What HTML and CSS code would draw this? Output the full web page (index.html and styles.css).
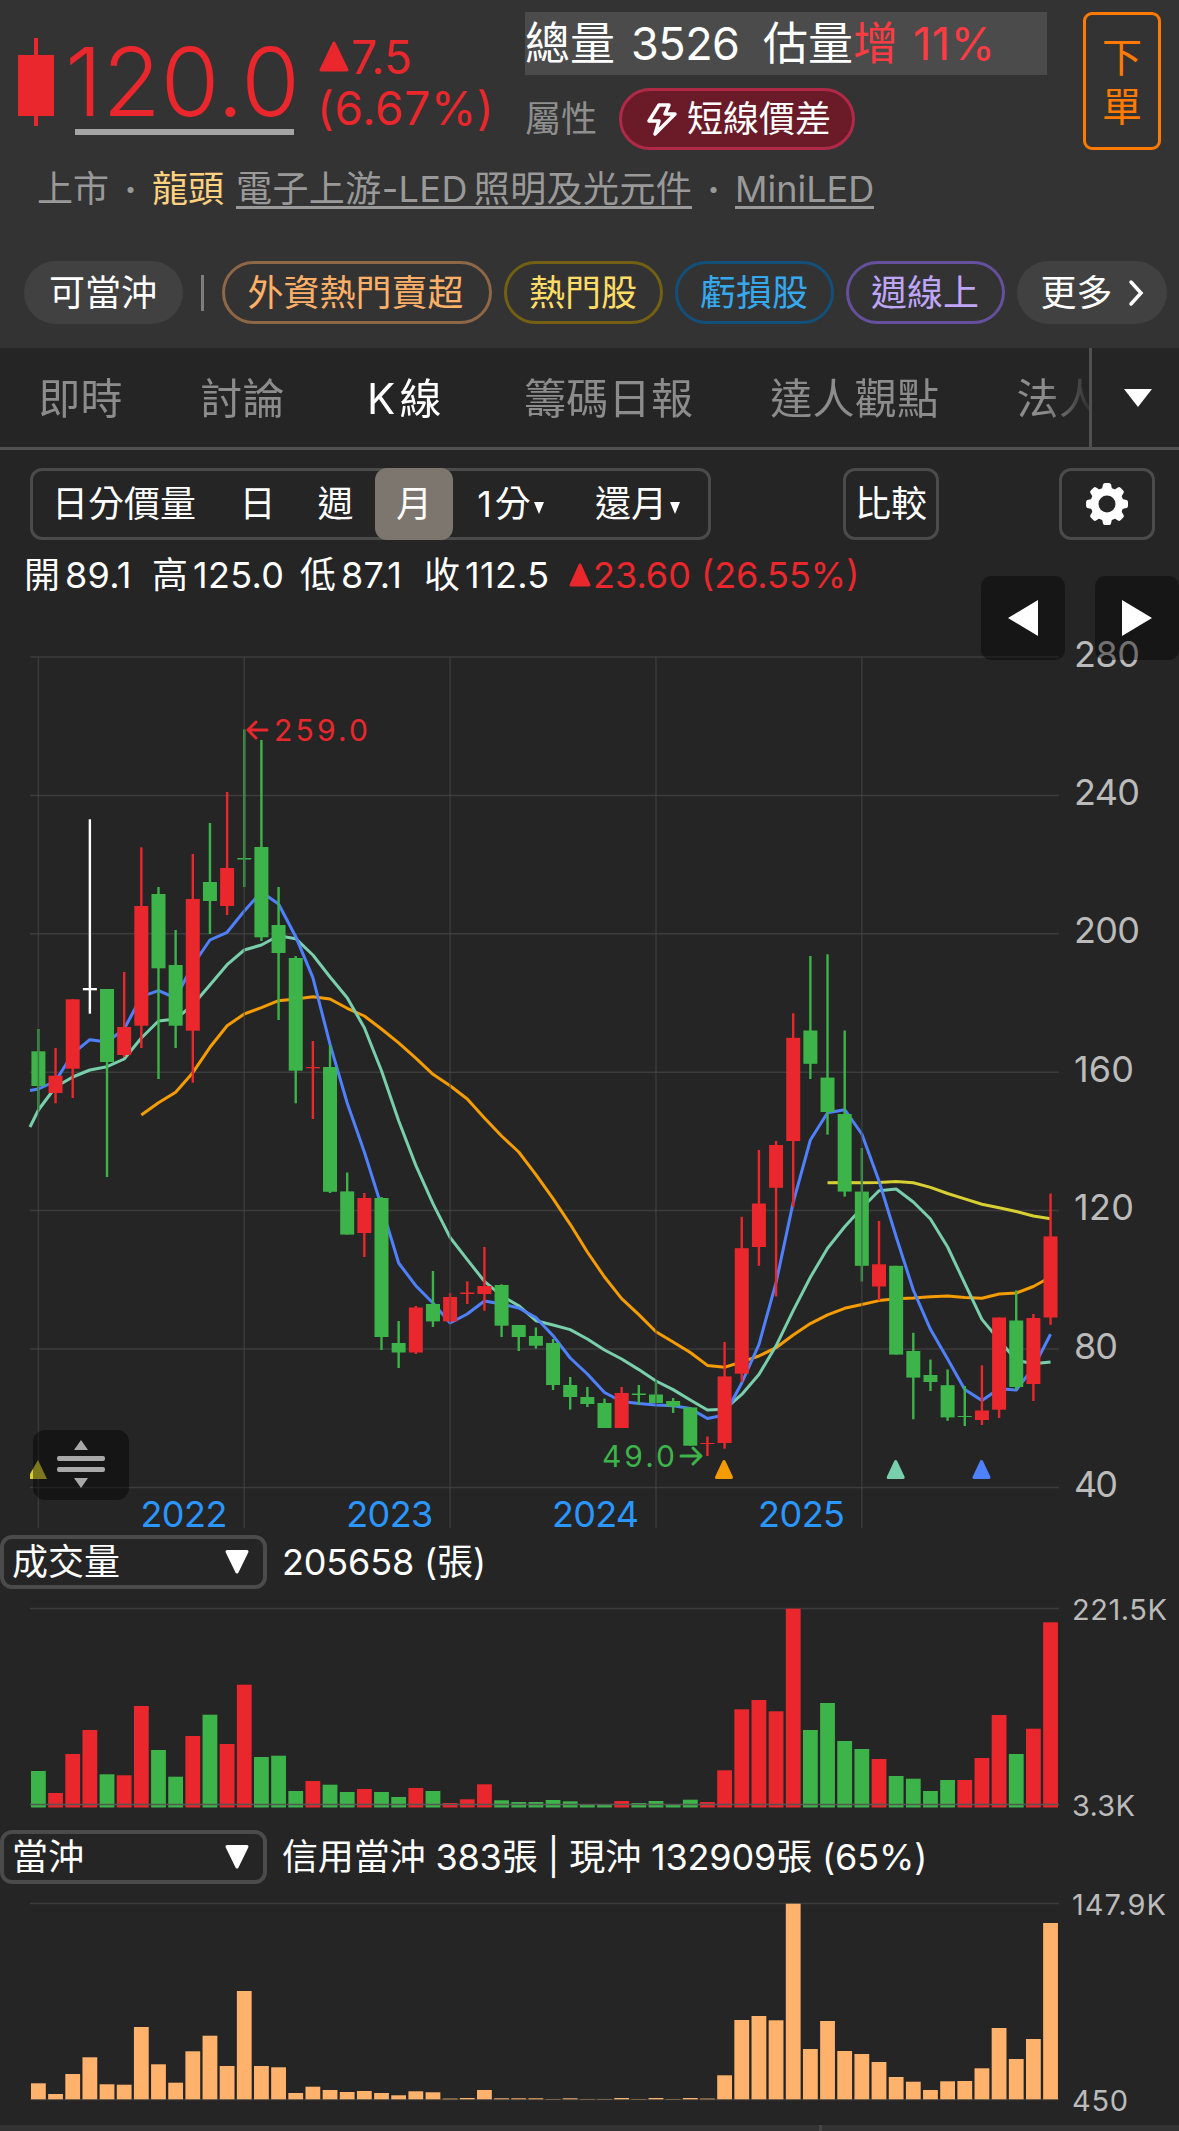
FILE: index.html
```html
<!DOCTYPE html>
<html lang="zh-Hant">
<head>
  <meta charset="UTF-8" />
  <meta name="viewport" content="width=device-width, initial-scale=1.0" />
  <title>K線</title>
  <link rel="stylesheet" href="styles.css">
</head>
<body>
  <header class="header">
    <div class="quote">
      <svg class="candle-icon" width="36" height="88" viewBox="0 0 36 88">
        <rect x="16" y="0" width="4" height="88" />
        <rect x="0" y="17" width="36" height="61" />
      </svg>
      <div class="price">120.0</div>
      <div class="change">
        <div class="change-row">
          <svg width="30" height="31" viewBox="0 0 30 31"><path d="M15 2 L28 29 H2 Z" /></svg>
          <span>7.5</span>
        </div>
        <div class="percent">(6.67%)</div>
      </div>
      <div class="summary">
        <div class="volume-box"><span>總量</span><span class="total">3526</span><span>估量</span><span class="up">增</span><span class="up ratio">11%</span></div>
        <div class="attr">
          <span class="attr-label">屬性</span>
          <span class="attr-pill">
            <svg width="32" height="33" viewBox="0 0 32 33"><path d="M13 2 L23 2 L19 11 H29 L9 31 L13 18 H3 Z" /></svg>
            短線價差
          </span>
        </div>
      </div>
      <button class="order"><span>下</span><span>單</span></button>
    </div>

    <div class="category">
      <span>上市</span><span class="dot">·</span><span class="leader">龍頭</span><a class="industry">電子上游-<span class="led">LED</span>照明及光元件</a><span class="dot">·</span><a class="mini">MiniLED</a>
    </div>

    <div class="chips">
      <span class="chip solid">可當沖</span>
      <span class="separator"></span>
      <span class="chip orange">外資熱門賣超</span>
      <span class="chip yellow">熱門股</span>
      <span class="chip blue">虧損股</span>
      <span class="chip purple">週線上</span>
      <span class="chip solid more">更多
        <svg width="16" height="28" viewBox="0 0 16 28"><path d="M3 3 L13 14 L3 25" /></svg>
      </span>
    </div>
  </header>

  <nav class="tabs">
    <div class="tab-list">
      <span>即時</span>
      <span>討論</span>
      <span class="active">K<i></i>線</span>
      <span>籌碼日報</span>
      <span>達人觀點</span>
      <span>法人</span>
    </div>
    <div class="tab-more">
      <svg width="28" height="18" viewBox="0 0 28 18"><path d="M0 0 H28 L14 18 Z" /></svg>
    </div>
  </nav>

  <div class="toolbar">
    <div class="periods">
      <span class="p-detail">日分價量</span>
      <span class="p-day">日</span>
      <span class="p-week">週</span>
      <span class="p-month">月</span>
      <span class="p-minute">1<i></i>分<svg width="10" height="12" viewBox="0 0 10 12"><path d="M0 0 H10 L5 12 Z" /></svg></span>
      <span class="p-restore">還月<svg width="10" height="12" viewBox="0 0 10 12"><path d="M0 0 H10 L5 12 Z" /></svg></span>
    </div>
    <button class="tool compare">比較</button>
    <button class="tool settings">
      <svg width="42" height="42" viewBox="-21 -21 42 42">
        <g id="gearTeeth"></g>
        <circle r="12.5" />
      </svg>
    </button>
  </div>

  <div class="ohlc">
    <span class="o">開<b>89.1</b></span>
    <span class="h">高<b>125.0</b></span>
    <span class="l">低<b>87.1</b></span>
    <span class="c">收<b>112.5</b></span>
    <span class="diff"><svg width="22" height="24" viewBox="0 0 22 24"><path d="M11 2 L20 22 H2 Z" /></svg><b>23.60 (26.55%)</b></span>
  </div>

  <section class="chart">
    <svg id="kline" width="1179" height="935" viewBox="0 600 1179 935"></svg>
    <button class="nav prev"><svg width="30" height="36" viewBox="0 0 30 36"><path d="M30 0 V36 L0 18 Z" /></svg></button>
    <button class="nav next"><svg width="30" height="36" viewBox="0 0 30 36"><path d="M0 0 V36 L30 18 Z" /></svg></button>
    <div class="resize">
      <svg width="48" height="50" viewBox="0 0 48 50">
        <path d="M24 1 L31 11 H17 Z M24 49 L31 39 H17 Z" />
        <rect x="0" y="17" width="48" height="5" rx="2" />
        <rect x="0" y="28" width="48" height="5" rx="2" />
      </svg>
    </div>
  </section>

  <section class="panel">
    <div class="panel-head">
      <div class="select"><span>成交量</span><svg width="24" height="24" viewBox="0 0 24 24"><path d="M2 1.500 H22 L12 22 Z" /></svg></div>
      <div class="panel-value">205658 (張)</div>
    </div>
    <svg id="volume" width="1179" height="241" viewBox="0 1589 1179 241"></svg>
  </section>

  <section class="panel">
    <div class="panel-head">
      <div class="select"><span>當沖</span><svg width="24" height="24" viewBox="0 0 24 24"><path d="M2 1.500 H22 L12 22 Z" /></svg></div>
      <div class="panel-value">信用當沖 383張 | 現沖 132909張 (65%)</div>
    </div>
    <svg id="daytrade" width="1179" height="241" viewBox="0 1884 1179 241"></svg>
  </section>

  <footer class="bottom"><div></div><div></div></footer>

  <script src="script.js"></script>
</body>
</html>
```
FILE: styles.css
```css
* {
  box-sizing: border-box;
}

body {
  margin: 0;
  width: 1179px;
  height: 2131px;
  overflow: hidden;
  background-color: #252525;
  color: #fff;
  font-family: Inter, "Noto Sans CJK TC", sans-serif;
  font-size: 36px;
  font-weight: 400;
  line-height: 1;
  white-space: nowrap;
}

svg {
  display: block;
  flex: none;
  overflow: visible;
}

button {
  font: inherit;
  color: inherit;
  background: none;
  border: none;
  padding: 0;
}

b {
  font-weight: 400;
}

/* header */
.header {
  height: 348px;
  background-color: #333;
}

.quote {
  display: flex;
  height: 162px;
  padding: 12px 18px 0;
}

.candle-icon {
  margin-top: 26px;
  fill: #ea272c;
}

.price {
  width: 219px;
  height: 123px;
  margin-left: 21px;
  padding-top: 22px;
  border-bottom: 6px solid #a5a5a5;
  color: #ea272c;
  font-size: 95px;
  font-weight: 350;
  letter-spacing: 0;
  text-indent: -10px;
}

.change {
  width: 206px;
  margin-left: 25px;
  padding-top: 21px;
  color: #ea272c;
  font-size: 46px;
}

.change svg,
.diff svg {
  fill: #ea272c;
  stroke: #ea272c;
  stroke-width: 3;
  stroke-linejoin: round;
}

.change-row {
  display: flex;
  align-items: center;
  gap: 2px;
  height: 47px;
}

.percent {
  margin-top: 5px;
  letter-spacing: 0.7px;
  text-indent: -2px;
}

.summary {
  width: 522px;
}

.volume-box {
  display: flex;
  align-items: center;
  height: 63px;
  background-color: #4b4b4b;
  font-size: 45px;
}

.total {
  width: 148px;
  padding-left: 16px;
  letter-spacing: -0.5px;
}

.up {
  color: #ff3b43;
}

.ratio {
  padding-left: 15px;
  letter-spacing: 0.5px;
}

.attr {
  display: flex;
  align-items: center;
  gap: 22px;
  margin-top: 13px;
  color: #8e8e8e;
}

.attr-pill {
  display: flex;
  align-items: center;
  gap: 9px;
  height: 62px;
  width: 236px;
  padding-left: 24px;
  border: 3px solid #b02a48;
  border-radius: 31px;
  background-color: #6b1a28;
  color: #fff;
}

.attr-pill svg {
  fill: none;
  stroke: #fff;
  stroke-width: 3.5;
  stroke-linejoin: round;
}

.order {
  display: flex;
  flex-direction: column;
  align-items: center;
  gap: 9px;
  width: 78px;
  height: 138px;
  margin-left: 36px;
  padding-top: 23px;
  border: 3px solid #ff7a00;
  border-radius: 9px;
  color: #ff7a00;
  font-size: 40px;
}

.category {
  display: flex;
  height: 47px;
  margin-top: 9px;
  padding-left: 37px;
  color: #999;
}

.category > * {
  height: 38px;
}

.dot {
  width: 43px;
  text-align: center;
  font-weight: 700;
}

.leader {
  margin-right: 12px;
  color: #ffd280;
}

.industry,
.mini {
  border-bottom: 3px solid #999;
}

.industry {
  width: 456px;
  letter-spacing: 0.4px;
}

.led {
  margin-right: 6px;
}

.mini {
  width: 139px;
}

.chips {
  display: flex;
  align-items: center;
  gap: 12px;
  height: 63px;
  margin-top: 43px;
  padding-left: 24px;
}

.chip {
  display: flex;
  align-items: center;
  justify-content: center;
  height: 63px;
  width: 159px;
  padding-right: 1px;
  border: 3px solid transparent;
  border-radius: 32px;
}

.chip.solid {
  background-color: #414141;
}

.separator {
  width: 3px;
  height: 36px;
  margin: 0 6px;
  background-color: #7d7d7d;
}

.chip.orange {
  width: 270px;
  padding-right: 3px;
  border-color: #8e6747;
  color: #ffb068;
}

.chip.yellow {
  border-color: #736012;
  color: #ffdd66;
}

.chip.blue {
  border-color: #12507a;
  color: #35a8ee;
}

.chip.purple {
  border-color: #66509e;
  color: #bfa5f8;
}

.chip.more {
  width: 150px;
  gap: 15px;
  padding: 0;
}

.more svg {
  fill: none;
  stroke: #fff;
  stroke-width: 3.5;
  stroke-linecap: round;
}

/* tabs */
.tabs {
  display: flex;
  height: 102px;
  border-bottom: 3px solid #505050;
}

.tab-list {
  display: flex;
  align-items: center;
  gap: 77px;
  width: 1089px;
  overflow: hidden;
  padding: 3px 0 0 38px;
  color: #8c8c8c;
  font-size: 42px;
  letter-spacing: 0.3px;
  -webkit-mask-image: linear-gradient(to right, #000 1045px, transparent 1095px);
  mask-image: linear-gradient(to right, #000 1045px, transparent 1095px);
}

.tab-list span {
  flex: none;
  min-width: 85px;
  text-align: center;
}

.tab-list i {
  display: inline-block;
  width: 4px;
}

.tab-list .active {
  color: #fff;
}

.tab-more {
  display: flex;
  flex: 1;
  align-items: center;
  padding-left: 32px;
  border-left: 3px solid #505050;
}

.tab-more svg,
.periods svg,
.nav svg {
  fill: #fff;
}

/* period toolbar */
.toolbar {
  display: flex;
  height: 72px;
  margin: 18px 24px 0 30px;
}

.periods {
  display: flex;
  align-items: center;
  width: 681px;
  height: 72px;
  border: 3px solid #4b4b4b;
  border-radius: 12px;
}

.periods span {
  display: flex;
  align-items: center;
  justify-content: center;
  height: 72px;
}

.periods i {
  width: 3px;
}

.p-detail {
  width: 186px;
  padding-right: 4px;
}

.p-day {
  width: 77px;
}

.p-week {
  width: 79px;
}

.p-month {
  width: 78px;
  border-radius: 12px;
  background-color: #7d766f;
}

.p-minute {
  width: 115px;
}

.p-restore {
  width: 139px;
}

.periods svg {
  margin: 8px 0 0 3px;
}

.tool {
  display: flex;
  align-items: center;
  justify-content: center;
  width: 96px;
  height: 72px;
  border: 3px solid #4b4b4b;
  border-radius: 12px;
}

.compare {
  margin-left: 132px;
}

.settings {
  margin-left: 120px;
}

.settings g {
  fill: #fff;
}

.settings circle {
  fill: none;
  stroke: #fff;
  stroke-width: 8;
}

.ohlc {
  display: flex;
  align-items: center;
  height: 60px;
  padding: 9px 0 0 24px;
}

.ohlc span {
  display: flex;
  align-items: center;
  gap: 5px;
}

.ohlc b {
  letter-spacing: 0.3px;
}

.ohlc .o {
  width: 128px;
}

.ohlc .h {
  width: 148px;
}

.ohlc .l {
  width: 124px;
}

.ohlc .c {
  width: 145px;
}

.ohlc .diff {
  gap: 2px;
  color: #ea272c;
}

.ohlc .diff b {
  letter-spacing: 0;
}

/* charts */
.chart {
  position: relative;
  height: 935px;
}

.grid {
  stroke: #3c3c3c;
  stroke-width: 1.5;
}

.year-line {
  stroke: #484848;
  stroke-opacity: 0.6;
  stroke-width: 1.5;
}

.base-line {
  stroke: #555;
  stroke-width: 1.3;
}

.axis {
  fill: #bbb;
}

.year {
  fill: #2a96ff;
}

.small {
  font-size: 29px;
}

.mark {
  font-size: 30px;
}

.arrow {
  fill: none;
  stroke-width: 3;
  stroke-linecap: round;
  stroke-linejoin: round;
}

.ma {
  fill: none;
  stroke-width: 3;
  stroke-linejoin: round;
}

.nav {
  position: absolute;
  top: -24px;
  display: flex;
  align-items: center;
  justify-content: center;
  width: 84px;
  height: 84px;
  border-radius: 10px;
  background-color: rgba(0, 0, 0, 0.4);
}

.prev {
  left: 981px;
}

.next {
  left: 1095px;
}

.resize {
  position: absolute;
  left: 33px;
  top: 830px;
  display: flex;
  align-items: center;
  justify-content: center;
  width: 96px;
  height: 70px;
  padding-bottom: 2px;
  border-radius: 12px;
  background-color: rgba(0, 0, 0, 0.42);
}

.resize svg {
  fill: #a8a8a8;
}

/* indicator panels */
.panel {
  height: 295px;
}

.panel-head {
  display: flex;
  align-items: center;
  height: 54px;
}

.select {
  display: flex;
  align-items: center;
  justify-content: space-between;
  width: 267px;
  height: 54px;
  padding: 0 14px 0 8px;
  border: 4px solid #4b4b4b;
  border-radius: 12px;
}

.select svg {
  fill: #fff;
  stroke: #fff;
  stroke-width: 3;
  stroke-linejoin: round;
}

.panel-value {
  margin-left: 15px;
  letter-spacing: -0.15px;
}

.bottom {
  display: flex;
  gap: 3px;
  height: 6px;
  background-color: #454545;
}

.bottom div {
  flex: 1;
  background-color: #333;
}

.bottom div:first-child {
  flex: none;
  width: 819px;
}
```
FILE: script.js
```js
const X0 = 38.4;
const STEP = 17.155;
const RED = "#ea272c";
const GREEN = "#3cb44a";
const colors = { R: RED, G: GREEN, W: "#ffffff" };

const x = i => X0 + STEP * i;

// colour, high, body top, body bottom, low
const candles = [
  ["G", 1029, 1051.3, 1086, 1110], ["R", 1048, 1075.7, 1093, 1103.3], ["R", 999.3, 999.3, 1068.7, 1098],
  ["W", 819.3, 988, 990.3, 1013.7], ["G", 989, 989, 1062, 1177], ["R", 972, 1027, 1055, 1057],
  ["R", 847.3, 906, 1025.7, 1048], ["G", 887, 894, 968.3, 1079], ["G", 930, 965, 1025.7, 1048],
  ["R", 854, 899, 1030.7, 1082.7], ["G", 823, 882, 901, 934], ["R", 792, 868, 906, 915],
  ["G", 729.3, 858, 859.5, 887], ["G", 740, 847, 937.3, 941], ["G", 887, 925, 953, 1020],
  ["G", 956, 958, 1070.7, 1103.3], ["R", 1041, 1067, 1068.3, 1119], ["G", 1045.7, 1067, 1191.8, 1193],
  ["G", 1172.5, 1191.4, 1234.6, 1234.6], ["R", 1193, 1198, 1233, 1257], ["G", 1197, 1198, 1337, 1350],
  ["G", 1321, 1343, 1352.5, 1368], ["R", 1306, 1307.5, 1352.5, 1354], ["G", 1271, 1304, 1321.4, 1327],
  ["R", 1293, 1297, 1321.4, 1322], ["R", 1281.4, 1292.5, 1294, 1304], ["R", 1247, 1286, 1294, 1310.7],
  ["G", 1284.3, 1285, 1325.7, 1337], ["G", 1325, 1325, 1337, 1351], ["G", 1327.5, 1336, 1345.7, 1348.6],
  ["G", 1339, 1343, 1385, 1390], ["G", 1377, 1385, 1397, 1409.6], ["G", 1387, 1397, 1404, 1407],
  ["G", 1398.6, 1403, 1428, 1428], ["R", 1387, 1393, 1428, 1428], ["G", 1385, 1393.5, 1395, 1405],
  ["G", 1381, 1394.5, 1403, 1403], ["G", 1398, 1401, 1406.5, 1413], ["G", 1407.4, 1407.4, 1445.7, 1445.7],
  ["R", 1436.5, 1443, 1444, 1456], ["R", 1342, 1376.4, 1443, 1448.7], ["R", 1216.8, 1248.2, 1373.7, 1382],
  ["R", 1150, 1203.5, 1247, 1265.8], ["R", 1141, 1145, 1187.8, 1296.4], ["R", 1013.3, 1037.8, 1141, 1207],
  ["G", 956, 1030.5, 1063.8, 1079], ["G", 954.3, 1077.6, 1112, 1134.6], ["G", 1030.5, 1114, 1191.6, 1196.6],
  ["G", 1148, 1191.6, 1265.8, 1281.5], ["R", 1221, 1264.3, 1286.5, 1300.6], ["G", 1265.8, 1265.8, 1354.6, 1354.6],
  ["G", 1332.8, 1351, 1377.6, 1419.3], ["G", 1359.6, 1375, 1382, 1391], ["G", 1369.5, 1385.2, 1417.4, 1420.8],
  ["G", 1386, 1416, 1417, 1426], ["R", 1365.3, 1410.5, 1420, 1425], ["R", 1317.5, 1317.5, 1409.7, 1418],
  ["G", 1290.3, 1320.5, 1387, 1390], ["R", 1314, 1318, 1384, 1401], ["R", 1193.5, 1236.4, 1317.5, 1324.8]
];

// moving averages: first candle index, optional lead-in point, values
const averages = [
  { color: "#f59c00", start: 6, y: [1115, 1102.7, 1092.3, 1072.7, 1047.3, 1025.7, 1014, 1007.7, 1000.7, 999, 996.7, 999, 1008.3, 1016, 1029, 1042.9, 1058.2, 1074.3, 1085.7, 1099, 1117.9, 1136, 1152, 1174.6, 1198.6, 1224.3, 1252, 1277, 1298.6, 1314.6, 1331.8, 1342, 1352.5, 1365.4, 1367.2, 1361.9, 1356, 1347.7, 1335, 1323.6, 1314.8, 1308.3, 1304.5, 1300.6, 1298.7, 1298, 1296.8, 1296, 1297.6, 1298.3, 1294, 1293, 1286.5, 1277] },
  { color: "#d8cf33", start: 46, y: [1182.8, 1182.4, 1182.8, 1182.4, 1181.6, 1182.8, 1187.4, 1193.5, 1198.9, 1204.2, 1207.7, 1211.5, 1216, 1218.8] },
  { color: "#79cfab", start: 0, lead: 1127, y: [1110, 1087, 1077, 1070, 1066.7, 1059, 1038, 1021, 1019, 1005, 985, 964.7, 950, 945, 935.7, 938.7, 955, 977, 997.7, 1027.8, 1070.7, 1120.7, 1165.4, 1203.6, 1237.5, 1259.6, 1281.4, 1295.7, 1305.7, 1320.7, 1325, 1329.6, 1339, 1350, 1359, 1369.6, 1381, 1389.6, 1400, 1410, 1409.3, 1394.4, 1374.5, 1345.8, 1310.6, 1277.3, 1248.2, 1226.8, 1208, 1190.8, 1189, 1202, 1219, 1247, 1283.4, 1319.4, 1340, 1360.3, 1363.8, 1362] },
  { color: "#4f81ff", start: 0, lead: 1090.5, y: [1089, 1081, 1053.7, 1039.7, 1042, 1029, 996.7, 990.7, 998, 965, 940, 932.3, 911, 892, 904, 936.7, 977.7, 1044.3, 1103, 1152, 1206.4, 1263, 1285.7, 1303, 1323, 1314, 1301, 1304, 1308, 1317.5, 1335.7, 1358, 1374, 1392.5, 1401.5, 1403.6, 1405, 1405.7, 1408.6, 1418.5, 1415, 1383, 1344.6, 1282.7, 1202.3, 1140, 1112.8, 1109.7, 1134, 1181, 1236.7, 1290, 1329.3, 1359, 1389.4, 1400.5, 1388.7, 1390, 1367.6, 1334.3] }
];

const volumeColors = "GRRRGRRGGRGRRGGGRGGRGGRGRRRGGGGGGGRGGGGRRRRRRGGGGRGGGGRRRGRR";
const volumes = [1771, 1793, 1754, 1730, 1774.3, 1775.3, 1706, 1750, 1776.7, 1736, 1714.7, 1744, 1684.7, 1757, 1755.7, 1791, 1781, 1784.7, 1792, 1789, 1792, 1797, 1788, 1791, 1803, 1799.3, 1784.3, 1800.3, 1802, 1802, 1800, 1801.3, 1804, 1804, 1801, 1803, 1801, 1804, 1799.7, 1802, 1770.3, 1709.3, 1700, 1711.3, 1608.7, 1730, 1703, 1741, 1749, 1759, 1776, 1778.7, 1791, 1780, 1780, 1758, 1715, 1754, 1728.7, 1622.3];
const dayTrades = [2083.3, 2094, 2074, 2057.3, 2084.3, 2084.7, 2027, 2064.3, 2082.7, 2051.3, 2035.7, 2066, 1991, 2066, 2067.3, 2093, 2086.7, 2090, 2092, 2091, 2093, 2095.3, 2091.3, 2092.3, 2098.6, 2098, 2090, 2098.3, 2098.3, 2098.3, 2099, 2098.3, 2099, 2099, 2098, 2099, 2098, 2099, 2098, 2098.6, 2075.3, 2020, 2016, 2020.3, 1903.7, 2049, 2021, 2051, 2054, 2062, 2077, 2081.7, 2090, 2081.3, 2081, 2068.3, 2028, 2059, 2039, 1923];

const line = (x1, y1, x2, y2, cls) => `<line class="${cls}" x1="${x1}" y1="${y1}" x2="${x2}" y2="${y2}" />`;
const rect = (rx, ry, w, h, fill) => `<rect x="${rx}" y="${ry}" width="${w}" height="${h}" fill="${fill}" />`;
const text = (tx, ty, w, cls, value, fill = "") =>
  `<text class="${cls}" x="${tx}" y="${ty}" textLength="${w}" ${fill ? `fill="${fill}"` : ""}>${value}</text>`;
const triangle = (cx, fill) =>
  `<path d="M${cx} 1461.500 l7.500 16 h-15 Z" fill="${fill}" stroke="${fill}" stroke-width="3" stroke-linejoin="round" />`;

function drawKline() {
  let out = "";
  [280, 240, 200, 160, 120, 80, 40].forEach((price, n) => {
    const y = 657 + n * 138.4;
    out += line(30, y, 1059, y, "grid");
    out += text(1074, y + 9.5, price < 100 ? 44 : price < 200 ? 60 : 66, "axis", price);
  });
  averages.forEach(ma => {
    const points = ma.y.map((y, k) => `${x(ma.start + k)},${y}`);
    if (ma.lead) points.unshift(`30,${ma.lead}`);
    out += `<polyline class="ma" stroke="${ma.color}" points="${points.join(" ")}" />`;
  });
  candles.forEach(([c, high, top, bottom, low], i) => {
    out += rect(x(i) - 1.2, high, 2.4, low - high, colors[c]);
    out += rect(x(i) - 7, top, 14, bottom - top, colors[c]);
  });
  ["2022", "2023", "2024", "2025", ""].forEach((year, n) => {
    out += line(x(n * 12), 657, x(n * 12), 1528, "year-line");
    if (year) out += text(x(n * 12) + 102, 1527, 87, "year", year);
  });
  out += `<path class="arrow" stroke="${RED}" d="M267 730 H248 M256 722 L248 730 L256 738" />`;
  out += text(274, 741, 94, "mark", "259.0", RED);
  out += text(602, 1467, 73, "mark", "49.0", GREEN);
  out += `<path class="arrow" stroke="${GREEN}" d="M681 1456 H701 M693 1448 L701 1456 L693 1464" />`;
  out += `<path d="M30 1478 V1474 L38 1460 L47 1479 H30 Z" fill="#d8cf33" />`;
  out += triangle(724, "#f59c00") + triangle(895.7, "#79cfab") + triangle(981.5, "#4f81ff");
  document.getElementById("kline").innerHTML = out;
}

function drawBars(tops, base, fill) {
  return tops.map((y, i) => rect(x(i) - 7.4, y, 14.8, base - y, fill(i))).join("");
}

function drawVolume() {
  document.getElementById("volume").innerHTML =
    line(30, 1608.5, 1059, 1608.5, "grid") +
    drawBars(volumes, 1807.5, i => colors[volumeColors[i]]) +
    line(30, 1804.5, 1059, 1804.5, "base-line") +
    text(1072, 1620, 95, "axis small", "221.5K") +
    text(1072, 1816, 63, "axis small", "3.3K");
}

function drawDayTrade() {
  document.getElementById("daytrade").innerHTML =
    line(30, 1903.5, 1059, 1903.5, "grid") +
    line(30, 2099.5, 1059, 2099.5, "grid") +
    drawBars(dayTrades, 2099.3, () => "#ffb26b") +
    text(1072, 1915, 94, "axis small", "147.9K") +
    text(1072, 2111, 56, "axis small", "450");
}

function drawGear() {
  let teeth = "";
  for (let a = 0; a < 360; a += 45) {
    teeth += `<path transform="rotate(${a})" d="M-5.500 -13 L-4 -19.500 Q-3.500 -21 -2 -21 H2 Q3.500 -21 4 -19.500 L5.500 -13 Z" />`;
  }
  document.getElementById("gearTeeth").innerHTML = teeth;
}

drawKline();
drawVolume();
drawDayTrade();
drawGear();
```
